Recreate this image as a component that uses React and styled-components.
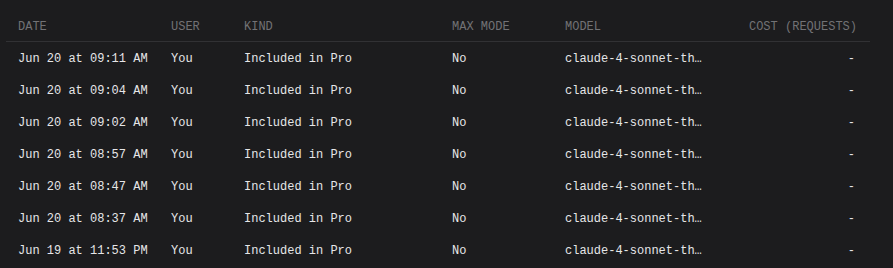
import React from "react";
import styled, { createGlobalStyle } from "styled-components";

const GlobalStyle = createGlobalStyle`
  html, body {
    margin: 0;
    padding: 0;
    background: #1c1c1e;
  }
  body {
    font-family: "Liberation Mono", "DejaVu Sans Mono", monospace;
  }
`;

const Wrapper = styled.div`
  width: 893px;
  height: 268px;
  padding: 8px 23px 0 6px;
  box-sizing: border-box;
  background: #1c1c1e;
  overflow: hidden;
`;

const cols = "153px 73px 208px 113px 161px 156px";

const HeaderRow = styled.div`
  display: grid;
  grid-template-columns: ${cols};
  height: 34px;
  align-items: center;
  border-bottom: 1px solid #313134;
  box-sizing: border-box;
`;

const Row = styled.div`
  display: grid;
  grid-template-columns: ${cols};
  height: 32px;
  align-items: center;
`;

const HeadCell = styled.div`
  padding: 5px ${(p) => (p.$right ? "13px" : "12px")} 0;
  font-size: 12px;
  color: #727275;
  text-transform: uppercase;
  text-align: ${(p) => (p.$right ? "right" : "left")};
  white-space: nowrap;
`;

const Cell = styled.div`
  padding: 2px ${(p) => (p.$right ? "15px" : "12px")} 0;
  font-size: 12px;
  color: #e6e6e8;
  text-align: ${(p) => (p.$right ? "right" : "left")};
  white-space: nowrap;
`;

const rows = [
  "Jun 20 at 09:11 AM",
  "Jun 20 at 09:04 AM",
  "Jun 20 at 09:02 AM",
  "Jun 20 at 08:57 AM",
  "Jun 20 at 08:47 AM",
  "Jun 20 at 08:37 AM",
  "Jun 19 at 11:53 PM",
];

export default function App() {
  return (
    <Wrapper>
      <GlobalStyle />
      <HeaderRow>
        <HeadCell>Date</HeadCell>
        <HeadCell>User</HeadCell>
        <HeadCell>Kind</HeadCell>
        <HeadCell>Max Mode</HeadCell>
        <HeadCell>Model</HeadCell>
        <HeadCell $right>Cost (Requests)</HeadCell>
      </HeaderRow>
      {rows.map((date) => (
        <Row key={date}>
          <Cell>{date}</Cell>
          <Cell>You</Cell>
          <Cell>Included in Pro</Cell>
          <Cell>No</Cell>
          <Cell>claude-4-sonnet-th…</Cell>
          <Cell $right>-</Cell>
        </Row>
      ))}
    </Wrapper>
  );
}
